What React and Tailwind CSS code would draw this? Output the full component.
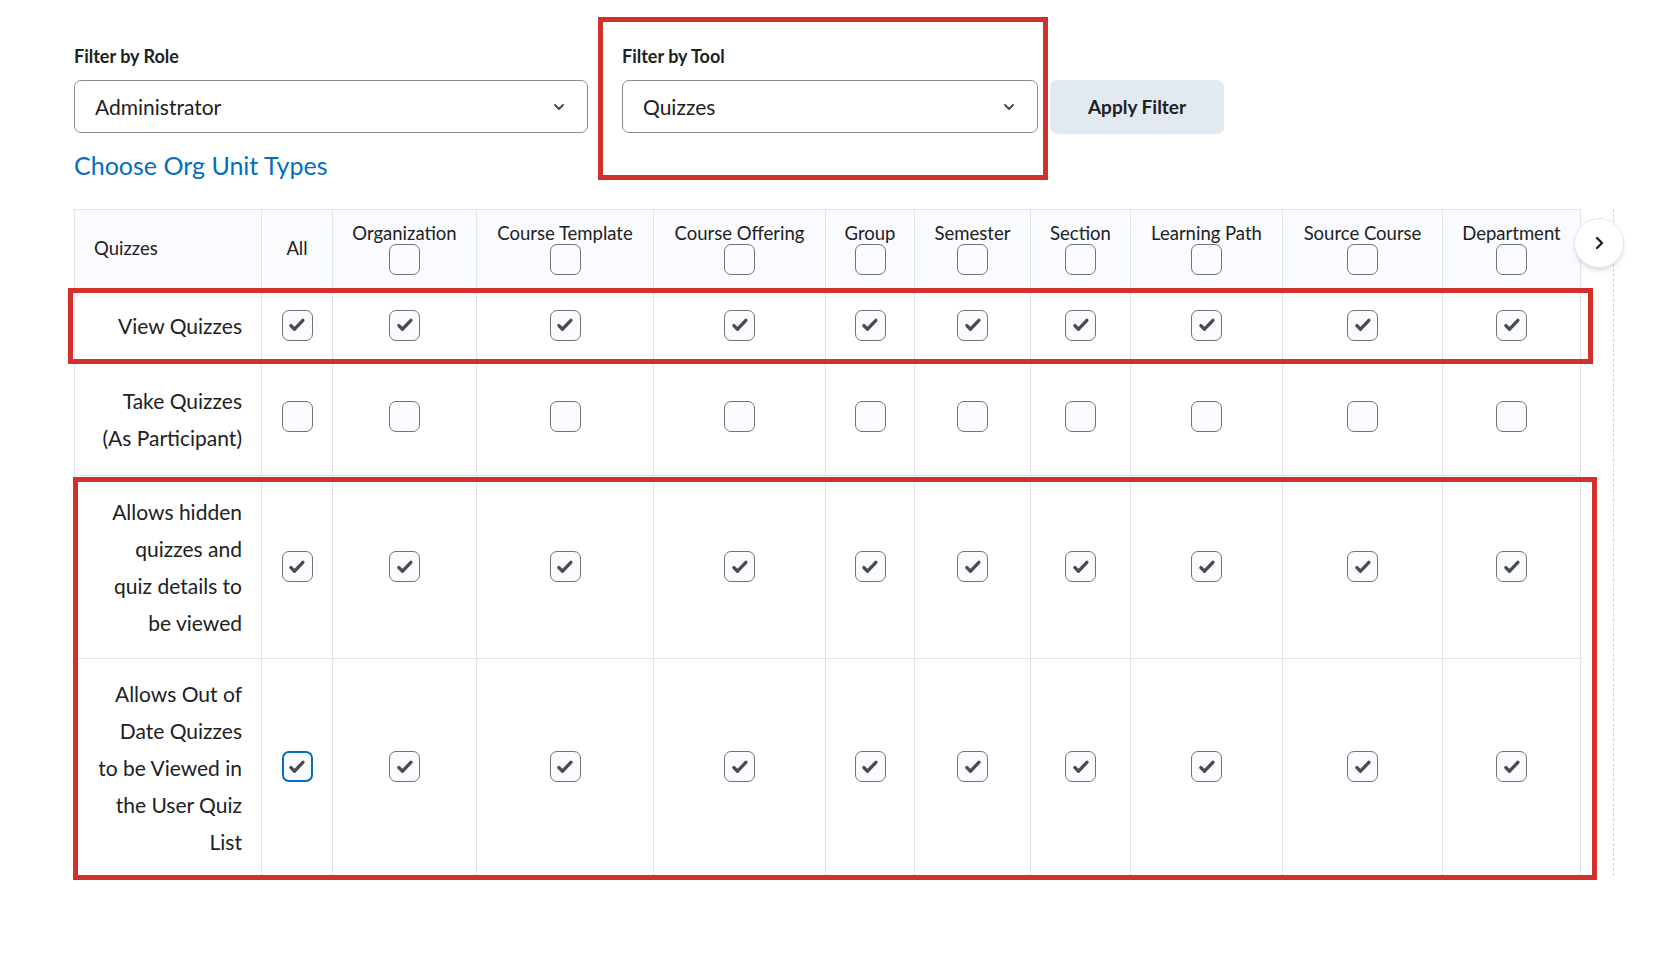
import React from "react";

const cols = [
  ["Organization", 144], ["Course Template", 177], ["Course Offering", 172], ["Group", 89],
  ["Semester", 116], ["Section", 100], ["Learning Path", 152], ["Source Course", 160], ["Department", 138],
];

function Check({ checked, focus }) {
  return (
    <span className={`inline-flex items-center justify-center w-[31px] h-[31px] rounded-[7px] bg-[#f9fbff] ${focus ? "border-2 border-[#006fbf]" : "border border-[#6e7376]"}`}>
      {checked && (
        <svg width="20" height="20" viewBox="0 0 18 18"><path d="M3.5 9.5l3.3 3.3 7.5-8" fill="none" stroke="#494c4e" strokeWidth="3" strokeLinecap="round" strokeLinejoin="round" /></svg>
      )}
    </span>
  );
}

function Chevron() {
  return (
    <svg width="16" height="16" viewBox="0 0 16 16"><path d="M4 6l4 4 4-4" fill="none" stroke="#494c4e" strokeWidth="2" strokeLinecap="round" strokeLinejoin="round" /></svg>
  );
}

const rows = [
  { label: ["View Quizzes"], h: 74, checked: true },
  { label: ["Take Quizzes", "(As Participant)"], h: 113, checked: false },
  { label: ["Allows hidden", "quizzes and", "quiz details to", "be viewed"], h: 183, checked: true },
  { label: ["Allows Out of", "Date Quizzes", "to be Viewed in", "the User Quiz", "List"], h: 217, checked: true, focus: true },
];

export default function App() {
  return (
    <div className="relative w-[1678px] h-[960px] bg-white text-[#202122]" style={{ fontFamily: "Lato, 'Noto Sans', sans-serif" }}>
      <div className="pl-[74px] pt-[42px] flex gap-[34px] items-start">
        <div className="w-[514px]">
          <div className="text-[18px] font-bold h-[28px] leading-[28px]">Filter by Role</div>
          <div className="mt-[10px] h-[53px] border border-[#868c8f] rounded-[7px] flex items-center justify-between px-[20px] text-[21px]">
            <span>Administrator</span><Chevron />
          </div>
          <div className="mt-[14px] text-[25px] text-[#006fbf]">Choose Org Unit Types</div>
        </div>
        <div className="w-[416px]">
          <div className="text-[18px] font-bold h-[28px] leading-[28px]">Filter by Tool</div>
          <div className="mt-[10px] h-[53px] border border-[#868c8f] rounded-[7px] flex items-center justify-between px-[20px] text-[21px]">
            <span>Quizzes</span><Chevron />
          </div>
        </div>
        <button className="mt-[38px] ml-[-22px] w-[174px] h-[54px] rounded-[7px] bg-[#e3e9f1] text-[19px] font-bold">Apply Filter</button>
      </div>

      <div className="absolute left-[74px] top-[209px] w-[1540px] border-r border-dashed border-[#cdd5dc]">
        <table className="border-collapse" style={{ tableLayout: "fixed" }}>
          <thead>
            <tr className="bg-[#f9fbff] h-[79px]">
              <th className="w-[187px] border border-[#dfe3ea] text-left font-normal text-[18.5px] pl-[19px]">Quizzes</th>
              <th className="w-[71px] border border-[#dfe3ea] font-normal text-[18.5px]">All</th>
              {cols.map(([n, w]) => (
                <th key={n} style={{ width: w }} className="border border-[#dfe3ea] font-normal text-[18.5px] align-top pt-[12px]">
                  <div className="leading-[22px] whitespace-nowrap">{n}</div>
                  <div className="flex justify-center"><Check /></div>
                </th>
              ))}
            </tr>
          </thead>
          <tbody>
            {rows.map((r, i) => (
              <tr key={i} style={{ height: r.h }}>
                <td className="border border-[#dfe3ea] text-right pr-[19px] text-[21px] leading-[37px]">
                  {r.label.map((l) => <div key={l}>{l}</div>)}
                </td>
                <td className="border border-[#dfe3ea] text-center"><Check checked={r.checked} focus={r.focus} /></td>
                {cols.map(([n]) => (
                  <td key={n} className="border border-[#dfe3ea] text-center"><Check checked={r.checked} /></td>
                ))}
              </tr>
            ))}
          </tbody>
        </table>
        <div className="absolute left-[1500px] top-[9px] w-[50px] h-[50px] rounded-full bg-white border border-[#e3e9f1] shadow-md flex items-center justify-center">
          <svg width="16" height="16" viewBox="0 0 16 16"><path d="M6 3l5 5-5 5" fill="none" stroke="#202122" strokeWidth="2.4" strokeLinecap="round" strokeLinejoin="round" /></svg>
        </div>
      </div>

      <div className="absolute left-[598px] top-[17px] w-[450px] h-[163px] border-[5px] border-[#d3302c]" />
      <div className="absolute left-[68px] top-[288px] w-[1525px] h-[76px] border-[5px] border-[#d3302c]" />
      <div className="absolute left-[73px] top-[477px] w-[1524px] h-[403px] border-[5px] border-[#d3302c]" />
    </div>
  );
}
